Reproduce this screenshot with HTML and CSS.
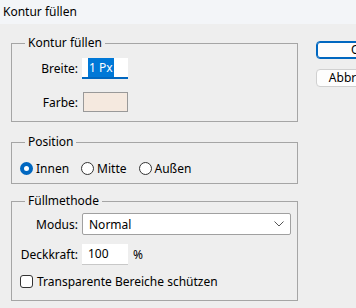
FILE: index.html
```html
<!DOCTYPE html>
<html lang="de">
<head>
    <meta charset="UTF-8">
    <meta name="viewport" content="width=device-width, initial-scale=1.0">
    <title>Kontur füllen</title>
    <link rel="stylesheet" href="styles.css">
</head>
<body>

<div class="titlebar">Kontur füllen</div>

<div class="dialog">
    <div class="groups">
        <fieldset class="group group-stroke">
            <legend>Kontur füllen</legend>
            <div class="row">
                <label for="width">Breite:</label>
                <div class="field field-active"><span class="selected">1 Px</span></div>
            </div>
            <div class="row row-color">
                <label>Farbe:</label>
                <div class="swatch"></div>
            </div>
        </fieldset>

        <fieldset class="group group-position">
            <legend>Position</legend>
            <div class="options">
                <label class="option"><span class="radio checked"></span>Innen</label>
                <label class="option"><span class="radio"></span>Mitte</label>
                <label class="option"><span class="radio"></span>Außen</label>
            </div>
        </fieldset>

        <fieldset class="group group-blend">
            <legend>Füllmethode</legend>
            <div class="row">
                <label>Modus:</label>
                <div class="select">
                    <span>Normal</span>
                    <svg width="10" height="6" viewBox="0 0 10 6"><path d="M0.5 0.5 L5 5 L9.5 0.5" fill="none" stroke="#555" stroke-width="1"/></svg>
                </div>
            </div>
            <div class="row row-opacity">
                <label>Deckkraft:</label>
                <div class="field">100</div>
                <span class="unit">%</span>
            </div>
            <label class="check-row"><span class="checkbox"></span>Transparente Bereiche schützen</label>
        </fieldset>
    </div>

    <div class="buttons">
        <button class="btn btn-default">OK</button>
        <button class="btn">Abbrechen</button>
    </div>
</div>

</body>
</html>
```

FILE: styles.css
```css
/* Dialog window */
body {
    margin: 0;
    padding: 0;
    background: #eeeeee;
    font-family: 'Noto Sans', sans-serif;
    font-size: 12px;
    color: #000;
    overflow: hidden;
}

.titlebar {
    height: 24px;
    line-height: 24px;
    padding-left: 3px;
    background: #f3f5f8;
}

.dialog {
    display: flex;
    padding: 11px 0 0 11px;
}

.groups {
    width: 287px;
    flex-shrink: 0;
}

.group {
    margin: 0;
    padding: 0;
    border: 1px solid #a5a5a5;
    min-width: 0;
}

.group legend {
    margin-left: 13px;
    padding: 0 3px;
    line-height: 16px;
}

.group-stroke {
    padding: 7px 0 9px;
}

.group-position {
    margin-top: 12px;
    padding: 10px 0 7px;
}

.group-blend {
    margin-top: 9px;
    padding: 4px 0 10px;
}

.row {
    display: flex;
    align-items: center;
}

.row label {
    width: 66px;
    text-align: right;
    margin-right: 4px;
}

.row-color {
    margin-top: 13px;
}

.field {
    width: 40px;
    height: 20px;
    padding-left: 6px;
    background: #fff;
    border-bottom: 1px solid #c8c8c8;
    line-height: 20px;
}

.field-active {
    height: 19px;
    border-bottom: 2px solid #0067c0;
}

.selected {
    background: #0078d7;
    color: #fff;
    padding: 1px 1px;
}

.swatch {
    width: 43px;
    height: 18px;
    margin-left: 1px;
    background: #f5e9df;
    border: 1px solid #999;
}

.options {
    display: flex;
    gap: 12px;
    padding-left: 8px;
}

.option {
    display: flex;
    align-items: center;
    height: 16px;
}

.radio {
    width: 11px;
    height: 11px;
    border: 1px solid #333;
    border-radius: 50%;
    margin-right: 3px;
    background: #fff;
    box-sizing: content-box;
}

.radio.checked {
    width: 5px;
    height: 5px;
    border: 4px solid #0067c0;
}

.select {
    width: 195px;
    height: 20px;
    display: flex;
    align-items: center;
    justify-content: space-between;
    padding: 0 6px;
    background: #fff;
    border: 1px solid #a0a0a0;
    border-radius: 2px;
}

.row-opacity {
    margin-top: 9px;
}

.unit {
    margin-left: 5px;
}

.check-row {
    display: flex;
    align-items: center;
    height: 18px;
    margin-top: 7px;
    padding-left: 8px;
}

.checkbox {
    width: 11px;
    height: 11px;
    border: 1px solid #333;
    border-radius: 3px;
    margin-right: 4px;
    background: #fff;
}

.buttons {
    display: flex;
    flex-direction: column;
    gap: 10px;
    margin-left: 18px;
    padding-top: 6px;
}

.btn {
    width: 87px;
    height: 18px;
    flex-shrink: 0;
    padding: 0;
    font-family: inherit;
    font-size: 12px;
    background: #fdfdfd;
    border: 1px solid #d0d0d0;
    border-radius: 4px;
    line-height: 16px;
}

.btn-default {
    border: 1px solid #0067c0;
    box-shadow: inset 0 0 0 1px #0067c0;
}
```
